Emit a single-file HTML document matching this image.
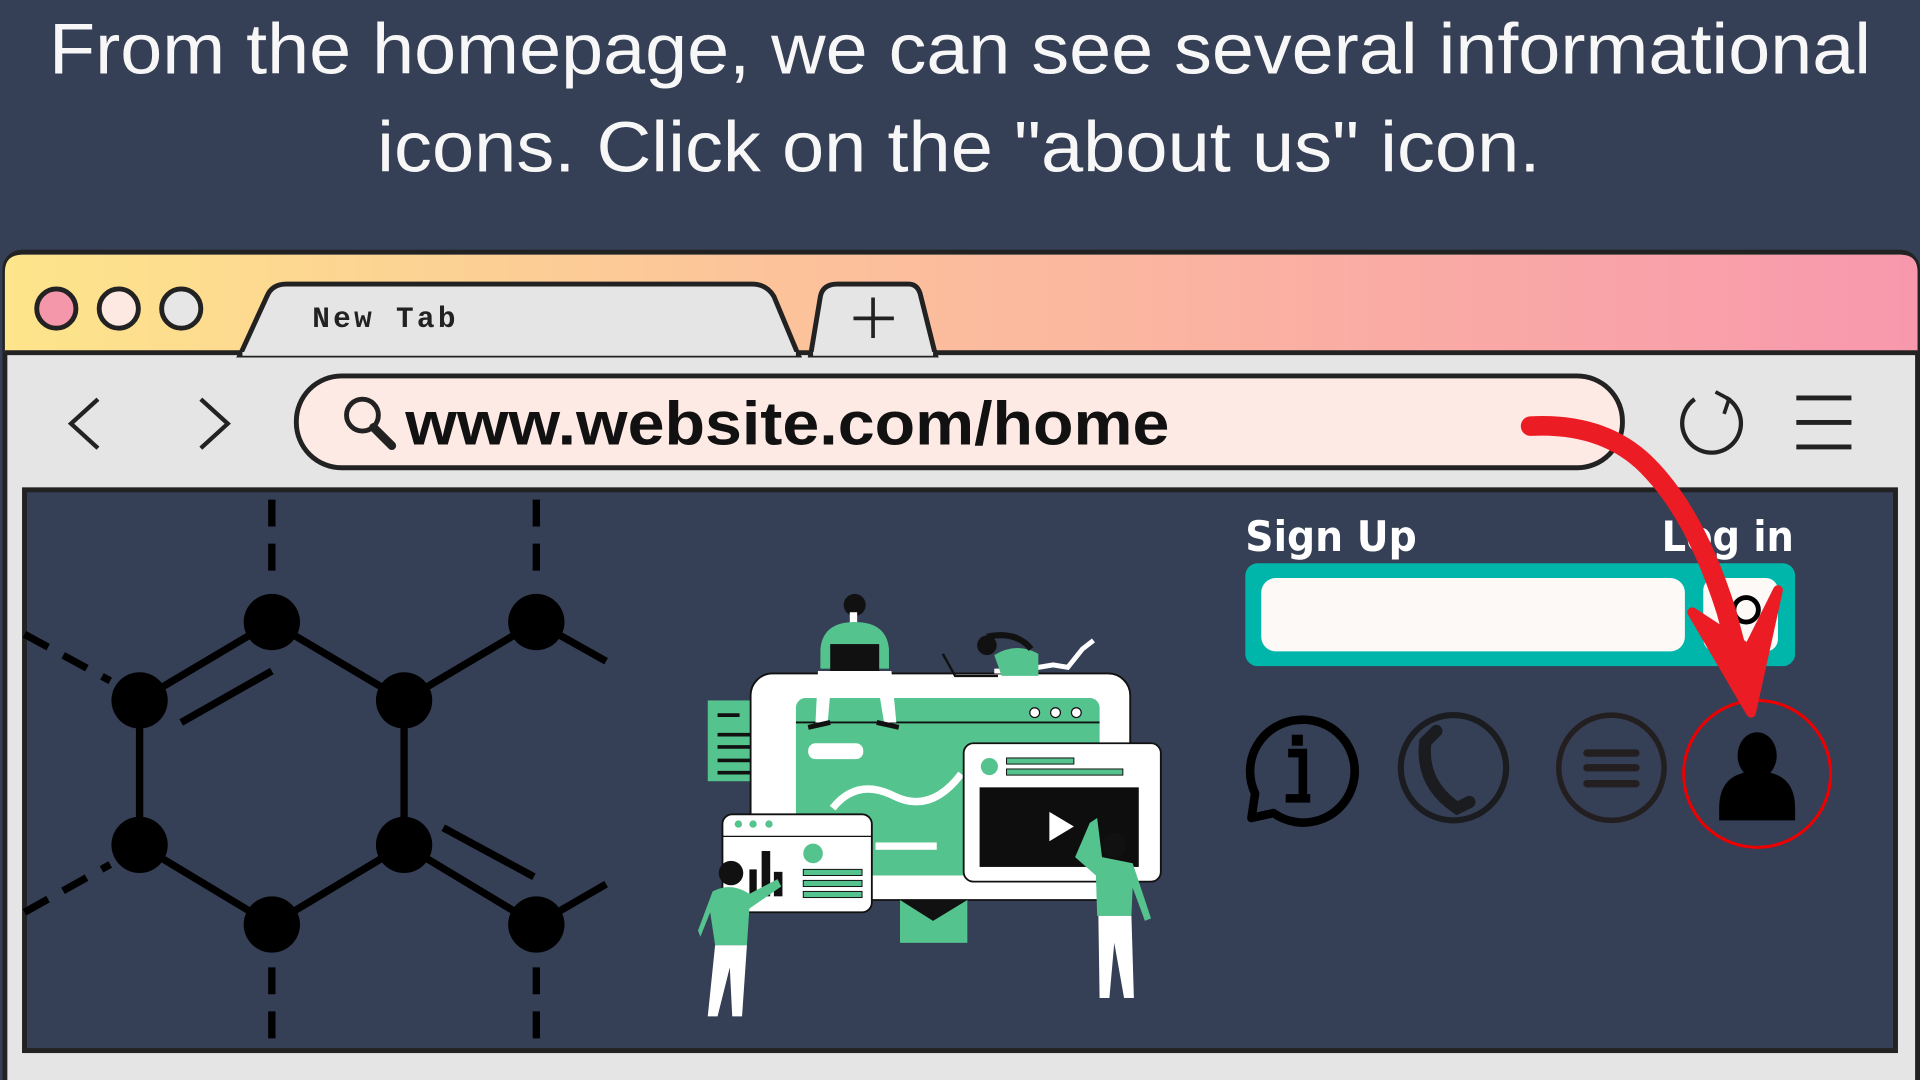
<!DOCTYPE html>
<html><head><meta charset="utf-8"><style>
html,body{margin:0;padding:0;background:#353f55;width:1920px;height:1080px;overflow:hidden}
svg{display:block}
</style></head><body>
<svg width="1920" height="1080" viewBox="0 0 1568 882" xmlns="http://www.w3.org/2000/svg">
<defs>
<linearGradient id="g" x1="0" x2="1" y1="0" y2="0">
<stop offset="0" stop-color="#fde58b"/><stop offset="0.4" stop-color="#fcc39a"/><stop offset="1" stop-color="#f898ad"/>
</linearGradient>
</defs>
<rect width="1568" height="882" fill="#353f55"/>
<g fill="#f7f7f7" font-family="Liberation Sans, sans-serif" font-size="58">
<text x="40" y="60" textLength="1488" lengthAdjust="spacingAndGlyphs">From the homepage, we can see several informational</text>
<text x="308" y="140" textLength="950" lengthAdjust="spacingAndGlyphs">icons. Click on the "about us" icon.</text>
</g>
<rect x="4" y="206" width="1562" height="690" rx="14" fill="#e5e5e5" stroke="#222" stroke-width="4"/>
<path d="M4 288 V222 Q4 208 18 208 H1552 Q1566 208 1566 222 V288 Z" fill="url(#g)"/>
<line x1="4" y1="288" x2="1566" y2="288" stroke="#222" stroke-width="4"/>
<circle cx="46" cy="252" r="16" fill="#f497ab" stroke="#222" stroke-width="4"/>
<circle cx="97" cy="252" r="16" fill="#fde8e2" stroke="#222" stroke-width="4"/>
<circle cx="148" cy="252" r="16" fill="#e6e6e6" stroke="#222" stroke-width="4"/>
<path d="M196 290 L218 242 Q222 232 234 232 H614 Q626 232 632 242 L652 290 Z" fill="#e5e5e5" stroke="#222" stroke-width="4"/>
<text x="255" y="267" font-family="Liberation Mono, monospace" font-weight="bold" font-size="24" fill="#222" textLength="117" lengthAdjust="spacing">New Tab</text>
<path d="M662 290 L670 242 Q672 232 684 232 H742 Q750 232 752 242 L764 290 Z" fill="#e5e5e5" stroke="#222" stroke-width="4"/>
<path d="M713 243 V276 M697 260 H730" stroke="#222" stroke-width="3"/>
<line x1="198" y1="289" x2="650" y2="289" stroke="#e5e5e5" stroke-width="3"/>
<line x1="664" y1="289" x2="762" y2="289" stroke="#e5e5e5" stroke-width="3"/>
<path d="M80 326 L58 346 L80 366" fill="none" stroke="#222" stroke-width="3.5"/>
<path d="M164 326 L186 346 L164 366" fill="none" stroke="#222" stroke-width="3.5"/>
<rect x="242" y="307" width="1083" height="75" rx="37" fill="#feeae4" stroke="#222" stroke-width="4"/>
<circle cx="296" cy="339" r="13" fill="none" stroke="#222" stroke-width="4"/>
<path d="M305 349 L320 364" stroke="#222" stroke-width="7" stroke-linecap="round"/>
<text x="331" y="363" font-family="Liberation Sans, sans-serif" font-weight="bold" font-size="50" fill="#111" textLength="624" lengthAdjust="spacingAndGlyphs">www.website.com/home</text>
<path d="M1410 325 A24 24 0 1 1 1384 326" fill="none" stroke="#222" stroke-width="3.5"/>
<path d="M1401 320 L1412 326 L1408 338" fill="none" stroke="#222" stroke-width="3"/>
<path d="M1467 325 H1512 M1467 345 H1512 M1467 365 H1512" stroke="#222" stroke-width="4"/>
<rect x="20" y="400" width="1528" height="458" fill="#353f55" stroke="#222" stroke-width="4"/>
<g stroke="#000" stroke-width="6" fill="none">
<path d="M222 508 L114 572 L114 690 L222 755 L330 690 L330 572 Z"/>
<path d="M330 572 L438 508 L495 540"/>
<path d="M330 690 L438 755 L495 722"/>
<path d="M148 590 L222 548"/>
<path d="M362 676 L436 716"/>
<path d="M222 408 V470 M438 408 V470 M222 790 V858 M438 790 V858 M20 518 L90 556 M20 745 L90 706" stroke-dasharray="22 14"/>
</g>
<g fill="#000">
<circle cx="222" cy="508" r="23"/><circle cx="114" cy="572" r="23"/><circle cx="330" cy="572" r="23"/>
<circle cx="114" cy="690" r="23"/><circle cx="330" cy="690" r="23"/><circle cx="222" cy="755" r="23"/>
<circle cx="438" cy="508" r="23"/><circle cx="438" cy="755" r="23"/>
</g>
<g>
<rect x="578" y="572" width="48" height="66" fill="#54c38d"/>
<path d="M586 584 H604 M586 600 H620 M586 610 H620 M586 621 H620 M586 631 H620" stroke="#111" stroke-width="3"/>
<rect x="613" y="550" width="310" height="185" rx="18" fill="#fff" stroke="#111" stroke-width="1.5"/>
<rect x="650" y="570" width="248" height="145" rx="8" fill="#54c38d"/>
<line x1="650" y1="590" x2="898" y2="590" stroke="#111" stroke-width="1.5"/>
<circle cx="845" cy="582" r="4" fill="#fff" stroke="#111"/><circle cx="862" cy="582" r="4" fill="#fff" stroke="#111"/><circle cx="879" cy="582" r="4" fill="#fff" stroke="#111"/>
<rect x="660" y="607" width="45" height="13" rx="6" fill="#fff"/>
<path d="M680 660 Q700 635 730 650 Q760 665 785 632" stroke="#fff" stroke-width="6" fill="none"/>
<rect x="715" y="688" width="50" height="6" fill="#fff"/>
<rect x="787" y="607" width="161" height="113" rx="8" fill="#fff" stroke="#111" stroke-width="1.5"/>
<circle cx="808" cy="626" r="7" fill="#54c38d"/>
<rect x="822" y="619" width="55" height="5" fill="#54c38d" stroke="#111" stroke-width="0.8"/>
<rect x="822" y="628" width="95" height="5" fill="#54c38d" stroke="#111" stroke-width="0.8"/>
<rect x="800" y="643" width="130" height="65" fill="#0e0e0e"/>
<path d="M857 663 L877 675 L857 687 Z" fill="#fff"/>
<rect x="590" y="665" width="122" height="80" rx="8" fill="#fff" stroke="#111" stroke-width="1.5"/>
<line x1="590" y1="683" x2="712" y2="683" stroke="#111"/>
<circle cx="603" cy="673" r="3" fill="#54c38d"/><circle cx="615" cy="673" r="3" fill="#54c38d"/><circle cx="628" cy="673" r="3" fill="#54c38d"/>
<rect x="612" y="710" width="6" height="22" fill="#111"/><rect x="622" y="695" width="7" height="37" fill="#111"/><rect x="632" y="712" width="7" height="20" fill="#111"/>
<circle cx="664" cy="697" r="8" fill="#54c38d"/>
<rect x="656" y="710" width="48" height="5" fill="#54c38d" stroke="#111" stroke-width="0.8"/>
<rect x="656" y="719" width="48" height="5" fill="#54c38d" stroke="#111" stroke-width="0.8"/>
<rect x="656" y="728" width="48" height="5" fill="#54c38d" stroke="#111" stroke-width="0.8"/>
<rect x="735" y="735" width="55" height="35" fill="#54c38d"/>
<path d="M735 735 L762 752 L790 735 Z" fill="#111"/>
<!-- person top -->
<circle cx="698" cy="494" r="9" fill="#111"/>
<rect x="694" y="500" width="6" height="10" fill="#fff"/>
<path d="M670 530 Q672 508 698 508 Q724 508 726 530 L726 546 H670 Z" fill="#54c38d"/>
<rect x="678" y="526" width="40" height="22" fill="#111"/>
<path d="M668 548 H728 L732 590 H722 L718 566 L698 555 L678 566 L676 590 H666 Z" fill="#fff"/>
<path d="M660 594 L678 590 M716 590 L734 594" stroke="#111" stroke-width="4"/>
<!-- lying person -->
<path d="M812 548 L830 548 L860 543 L872 545 L884 530 L893 523" stroke="#fff" stroke-width="4" fill="none"/>
<path d="M770 534 L780 552 H815" stroke="#111" stroke-width="2" fill="none"/>
<path d="M812 535 Q830 524 848 534 L848 552 L818 552 Z" fill="#54c38d"/>
<circle cx="806" cy="527" r="8" fill="#111"/>
<path d="M806 520 Q830 515 842 530" stroke="#111" stroke-width="5" fill="none"/>
<!-- left person -->
<circle cx="597" cy="713" r="10" fill="#111"/>
<path d="M582 728 Q597 720 612 730 L635 718 L638 724 L612 742 L610 772 H584 L580 745 L572 765 L570 760 Z" fill="#54c38d"/>
<path d="M584 772 H610 L606 830 H598 L596 790 L586 830 H578 Z" fill="#fff"/>
<!-- right person -->
<circle cx="910" cy="690" r="10" fill="#111"/>
<path d="M890 672 L896 668 L900 700 L925 705 L940 750 L935 752 L925 725 L924 748 H896 L895 715 L878 700 Z" fill="#54c38d"/>
<path d="M897 748 H924 L926 815 H918 L910 770 L906 815 H898 Z" fill="#fff"/>
</g>
<g font-family="DejaVu Sans, Liberation Sans, sans-serif" font-weight="bold" fill="#fff" font-size="34">
<text x="1017" y="450" textLength="140" lengthAdjust="spacingAndGlyphs">Sign Up</text>
<text x="1357" y="450" textLength="108" lengthAdjust="spacingAndGlyphs">Log in</text>
</g>
<rect x="1017" y="460" width="449" height="84" rx="10" fill="#00b5a9"/>
<rect x="1030" y="472" width="346" height="60" rx="12" fill="#fcf9f7"/>
<rect x="1391" y="472" width="61" height="60" rx="10" fill="#fcf9f7"/>
<circle cx="1426" cy="498" r="10" fill="none" stroke="#000" stroke-width="4"/>
<path d="M1060 588 A42 42 0 1 1 1040 664 L1022 668 L1025 648 A42 42 0 0 1 1060 588 Z" fill="none" stroke="#000" stroke-width="7" stroke-linejoin="round"/>
<rect x="1055" y="600" width="9" height="9" fill="#000"/>
<path d="M1052 615 H1064 V650 M1050 652 H1070" stroke="#000" stroke-width="7" fill="none"/>
<circle cx="1187" cy="627" r="43" fill="none" stroke="#1b1c20" stroke-width="5"/>
<path d="M1173 597 L1164 606 Q1160 640 1190 660 L1200 655" stroke="#1b1c20" stroke-width="10" fill="none" stroke-linecap="round"/>
<circle cx="1316" cy="627" r="43" fill="none" stroke="#231f20" stroke-width="4.5"/>
<path d="M1296 615 H1336 M1296 627 H1336 M1296 640 H1336" stroke="#231f20" stroke-width="6" stroke-linecap="round"/>
<ellipse cx="1435" cy="617" rx="16" ry="19" fill="#000"/>
<path d="M1404 670 V660 Q1404 630 1435 630 Q1466 630 1466 660 V670 Z" fill="#000"/>
<ellipse cx="1435" cy="632" rx="60" ry="60" fill="none" stroke="#e00" stroke-width="2.5"/>
<path d="M1250 348 Q1310 345 1345 380 Q1385 420 1410 500 L1426 560" fill="none" stroke="#ec1c24" stroke-width="16" stroke-linecap="round"/>
<path d="M1382 500 L1430 582 L1452 482 L1428 530 Z" fill="#ec1c24" stroke="#ec1c24" stroke-width="8" stroke-linejoin="round"/>
</svg>
</body></html>
